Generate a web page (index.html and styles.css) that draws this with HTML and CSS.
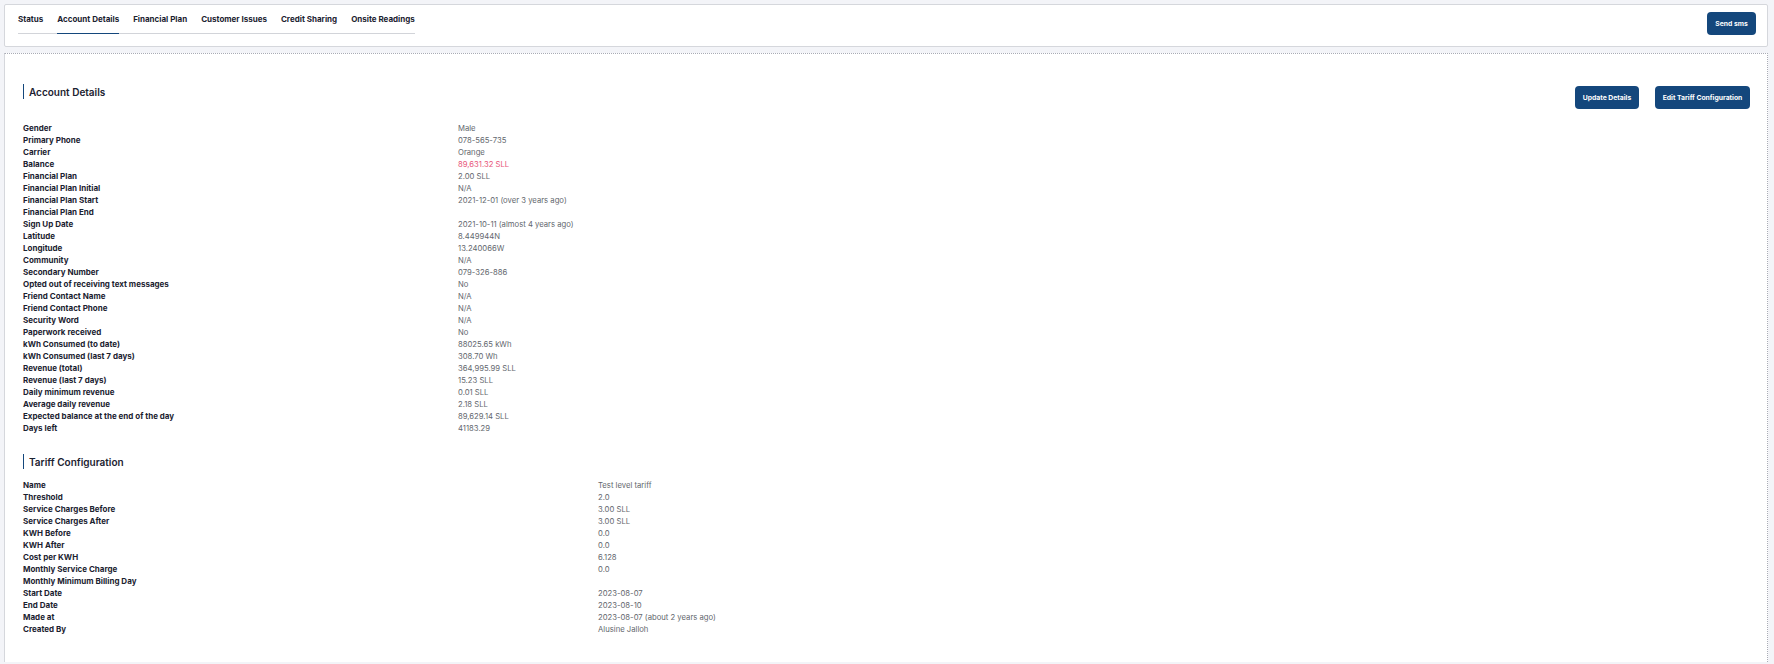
FILE: index.html
```html
<!DOCTYPE html>
<html lang="en">
<head>
<meta charset="utf-8">
<title>Account Details</title>
<link rel="stylesheet" href="styles.css">
</head>
<body>
<header class="card top-card">
  <nav class="tabs">
    <a class="tab">Status</a>
    <a class="tab active">Account Details</a>
    <a class="tab">Financial Plan</a>
    <a class="tab">Customer Issues</a>
    <a class="tab">Credit Sharing</a>
    <a class="tab">Onsite Readings</a>
  </nav>
  <button class="btn">Send sms</button>
</header>
<main class="card main-card">
  <section class="head-row">
    <h2 class="section-title">Account Details</h2>
    <div class="actions">
      <button class="btn">Update Details</button>
      <button class="btn">Edit Tariff Configuration</button>
    </div>
  </section>
  <dl class="details account">
    <dt>Gender</dt><dd>Male</dd>
    <dt>Primary Phone</dt><dd>078-565-735</dd>
    <dt>Carrier</dt><dd>Orange</dd>
    <dt>Balance</dt><dd class="neg">89,631.32 SLL</dd>
    <dt>Financial Plan</dt><dd>2.00 SLL</dd>
    <dt>Financial Plan Initial</dt><dd>N/A</dd>
    <dt>Financial Plan Start</dt><dd>2021-12-01 (over 3 years ago)</dd>
    <dt>Financial Plan End</dt><dd></dd>
    <dt>Sign Up Date</dt><dd>2021-10-11 (almost 4 years ago)</dd>
    <dt>Latitude</dt><dd>8.449944N</dd>
    <dt>Longitude</dt><dd>13.240066W</dd>
    <dt>Community</dt><dd>N/A</dd>
    <dt>Secondary Number</dt><dd>079-326-886</dd>
    <dt>Opted out of receiving text messages</dt><dd>No</dd>
    <dt>Friend Contact Name</dt><dd>N/A</dd>
    <dt>Friend Contact Phone</dt><dd>N/A</dd>
    <dt>Security Word</dt><dd>N/A</dd>
    <dt>Paperwork received</dt><dd>No</dd>
    <dt>kWh Consumed (to date)</dt><dd>88025.65 kWh</dd>
    <dt>kWh Consumed (last 7 days)</dt><dd>308.70 Wh</dd>
    <dt>Revenue (total)</dt><dd>364,995.99 SLL</dd>
    <dt>Revenue (last 7 days)</dt><dd>15.23 SLL</dd>
    <dt>Daily minimum revenue</dt><dd>0.01 SLL</dd>
    <dt>Average daily revenue</dt><dd>2.18 SLL</dd>
    <dt>Expected balance at the end of the day</dt><dd>89,629.14 SLL</dd>
    <dt>Days left</dt><dd>41183.29</dd>
  </dl>
  <h2 class="section-title tariff-title">Tariff Configuration</h2>
  <dl class="details tariff">
    <dt>Name</dt><dd>Test level tariff</dd>
    <dt>Threshold</dt><dd>2.0</dd>
    <dt>Service Charges Before</dt><dd>3.00 SLL</dd>
    <dt>Service Charges After</dt><dd>3.00 SLL</dd>
    <dt>KWH Before</dt><dd>0.0</dd>
    <dt>KWH After</dt><dd>0.0</dd>
    <dt>Cost per KWH</dt><dd>6.128</dd>
    <dt>Monthly Service Charge</dt><dd>0.0</dd>
    <dt>Monthly Minimum Billing Day</dt><dd></dd>
    <dt>Start Date</dt><dd>2023-08-07</dd>
    <dt>End Date</dt><dd>2023-08-10</dd>
    <dt>Made at</dt><dd>2023-08-07 (about 2 years ago)</dd>
    <dt>Created By</dt><dd>Alusine Jalloh</dd>
  </dl>
</main>
</body>
</html>
```
FILE: styles.css
```css
* { box-sizing: border-box; }
html, body { height: 100%; }
body {
  margin: 0;
  padding: 4px 6px 2px 4px;
  background: #f3f4f8;
  font-family: Inter, "Liberation Sans", sans-serif;
  color: #1b2230;
  overflow: hidden;
}
.card { background: #fff; border: 1px solid #d5d7dc; }
.top-card {
  height: 43px;
  padding: 7px 11px 0 13px;
  display: flex;
  justify-content: space-between;
  align-items: flex-start;
  border-radius: 2px;
}
.tabs { display: flex; gap: 14px; height: 22px; border-bottom: 1px solid #d2d4d9; padding-top: 2px; }
.tab {
  font-size: 8px;
  font-weight: 700;
  height: 19px;
  color: #1b2230;
}
.tab.active { border-bottom: 1px solid #14477c; height: 20px; }
.btn {
  border: 0;
  border-radius: 4px;
  background: #14477c;
  color: #fff;
  font: 700 6.8px Inter, "Liberation Sans", sans-serif;
  height: 23px;
  padding: 0 8px;
}
.top-card .btn { width: 49px; padding: 0; }
.main-card {
  margin-top: 6px;
  height: 609px;
  border: 0;
  border-top: 1px dotted #a9abb5;
  border-right: 1px dotted #a9abb5;
  border-left: 1px solid #d5d7dc;
  padding: 30px 17px 0 18px;
}
.head-row { display: flex; justify-content: space-between; align-items: flex-start; }
.section-title {
  margin: 0;
  height: 15px;
  line-height: 16px;
  font-size: 10px;
  font-weight: 600;
  border-left: 1px solid #14477c;
  padding-left: 5px;
  color: #1b2230;
}
.actions { display: flex; gap: 16px; margin-top: 2px; }
.actions .btn:first-child { width: 64px; padding: 0; }
.actions .btn:last-child { width: 95px; padding: 0; }
.details {
  margin: 0;
  display: grid;
  grid-auto-rows: 12px;
  line-height: 12px;
}
.details dt { font-size: 8px; font-weight: 700; color: #1b2230; }
.details dd { margin: 0; font-size: 7.7px; line-height: 13px; color: #63676e; }
.details dd.neg { color: #e8557a; }
.account { grid-template-columns: 435px 1fr; margin-top: 13px; }
.tariff { grid-template-columns: 575px 1fr; margin-top: 10px; }
.tariff-title { margin-top: 20px; }
```
